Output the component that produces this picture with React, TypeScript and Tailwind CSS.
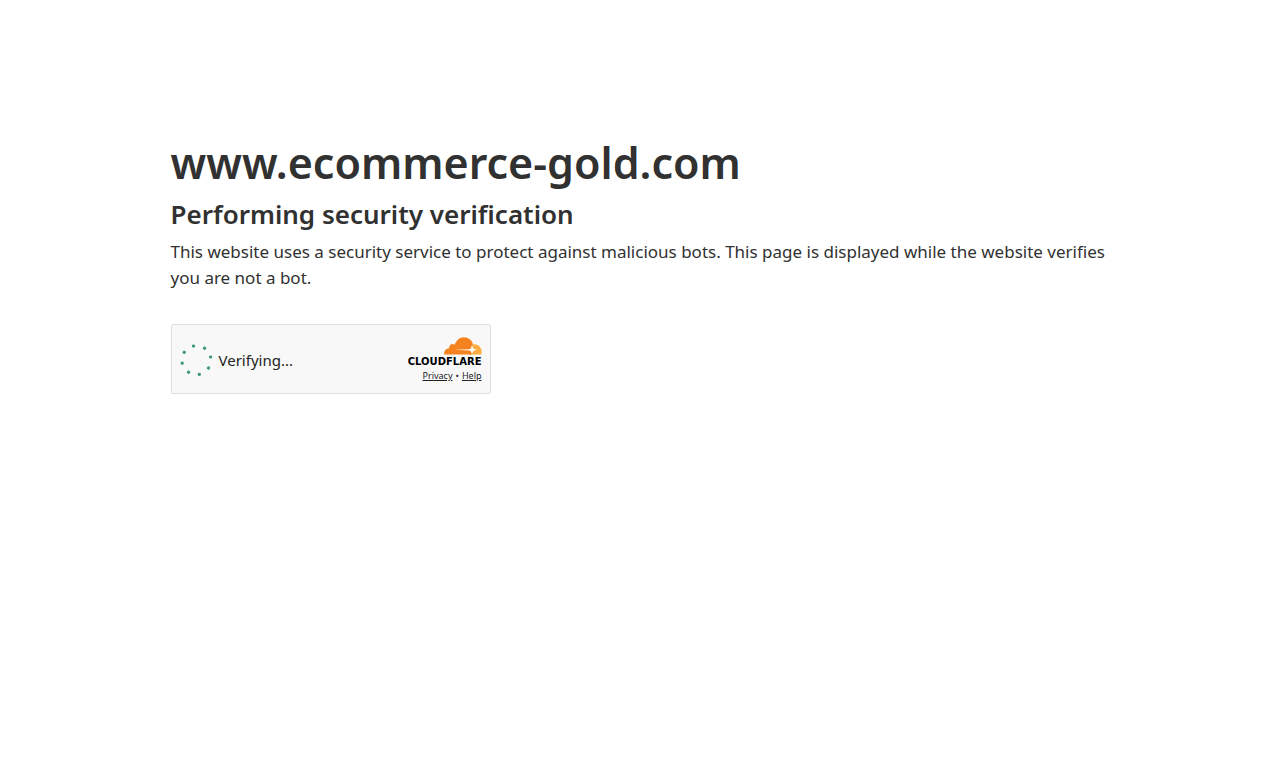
type Dot = {
  cx: number
  cy: number
}

const dots: Dot[] = [
  { cx: 13.5, cy: 2 },
  { cx: 24.5, cy: 4.2 },
  { cx: 30.6, cy: 13 },
  { cx: 28.5, cy: 24 },
  { cx: 19.3, cy: 30.3 },
  { cx: 8.5, cy: 28.2 },
  { cx: 2.2, cy: 19.2 },
  { cx: 4.3, cy: 8.3 },
]

function Spinner() {
  return (
    <svg viewBox="0 0 33 33" className="size-[33px]" aria-hidden="true">
      {dots.map((dot, index) => (
        <rect
          key={index}
          x={dot.cx - 1.5}
          y={dot.cy - 1.5}
          width="3"
          height="3"
          rx="0.8"
          fill="#3d9970"
          transform={`rotate(${index * 45 - 10} ${dot.cx} ${dot.cy})`}
        />
      ))}
    </svg>
  )
}

function CloudLogo() {
  return (
    <svg viewBox="0 0 38 18" className="h-[18px] w-[38px]" aria-hidden="true">
      <path
        fill="#fbad41"
        d="M29 7.4c4.800-.7 8.700 3 8.700 7.600 0 1-.1 1.700-.4 2.400H25z"
      />
      <path
        fill="#f6821f"
        d="M.2 17.400C-.3 14 2 11.300 5.200 11.200 4.700 8.300 8 6 10.700 7.700 12.300 3.300 15.600.3 19.700.3c4.700 0 8.400 3 9.300 7.200l-1.600 4.600.9 5.300z"
      />
      <path
        fill="#fff"
        d="M10.500 12.800l14.800-.6 1.500-.8 1.200-3.400 1.200 3.400 3.300 1.300-3.300 1.300L28 17l-1.200-2.800-1.500-.8z"
      />
    </svg>
  )
}

function Turnstile() {
  return (
    <section className="flex w-[320px] items-center justify-between rounded-xs border border-[#dedede] bg-[#f8f8f8] px-2 pt-3 pb-2.5 text-[#232323]">
      <div className="flex items-center gap-1.5">
        <Spinner />
        <span className="text-[15px] leading-5">Verifying...</span>
      </div>

      {/* Branding and links */}
      <div className="flex flex-col items-end gap-px">
        <CloudLogo />
        <span className="font-['DejaVu_Sans',sans-serif] text-[10px] leading-3 font-bold text-black">CLOUDFLARE</span>
        <div className="flex gap-[3px] text-[9px] leading-[14px]">
          <a href="#privacy" className="underline">Privacy</a>
          <span>•</span>
          <a href="#help" className="underline">Help</a>
        </div>
      </div>
    </section>
  )
}

export default function App() {
  return (
    <main className="mx-auto max-w-[987px] px-6 pt-[133px] font-['Noto_Sans',sans-serif] text-[#313131]">
      <h1 className="text-[43px] leading-[60px] font-semibold">www.ecommerce-gold.com</h1>
      <h2 className="pt-[3px] text-[26px] leading-9 font-semibold">Performing security verification</h2>
      <p className="mt-[7px] mb-[33px] text-[17px] leading-[26px]">
        This website uses a security service to protect against malicious bots. This page is displayed while the
        website verifies you are not a bot.
      </p>
      <Turnstile />
    </main>
  )
}
